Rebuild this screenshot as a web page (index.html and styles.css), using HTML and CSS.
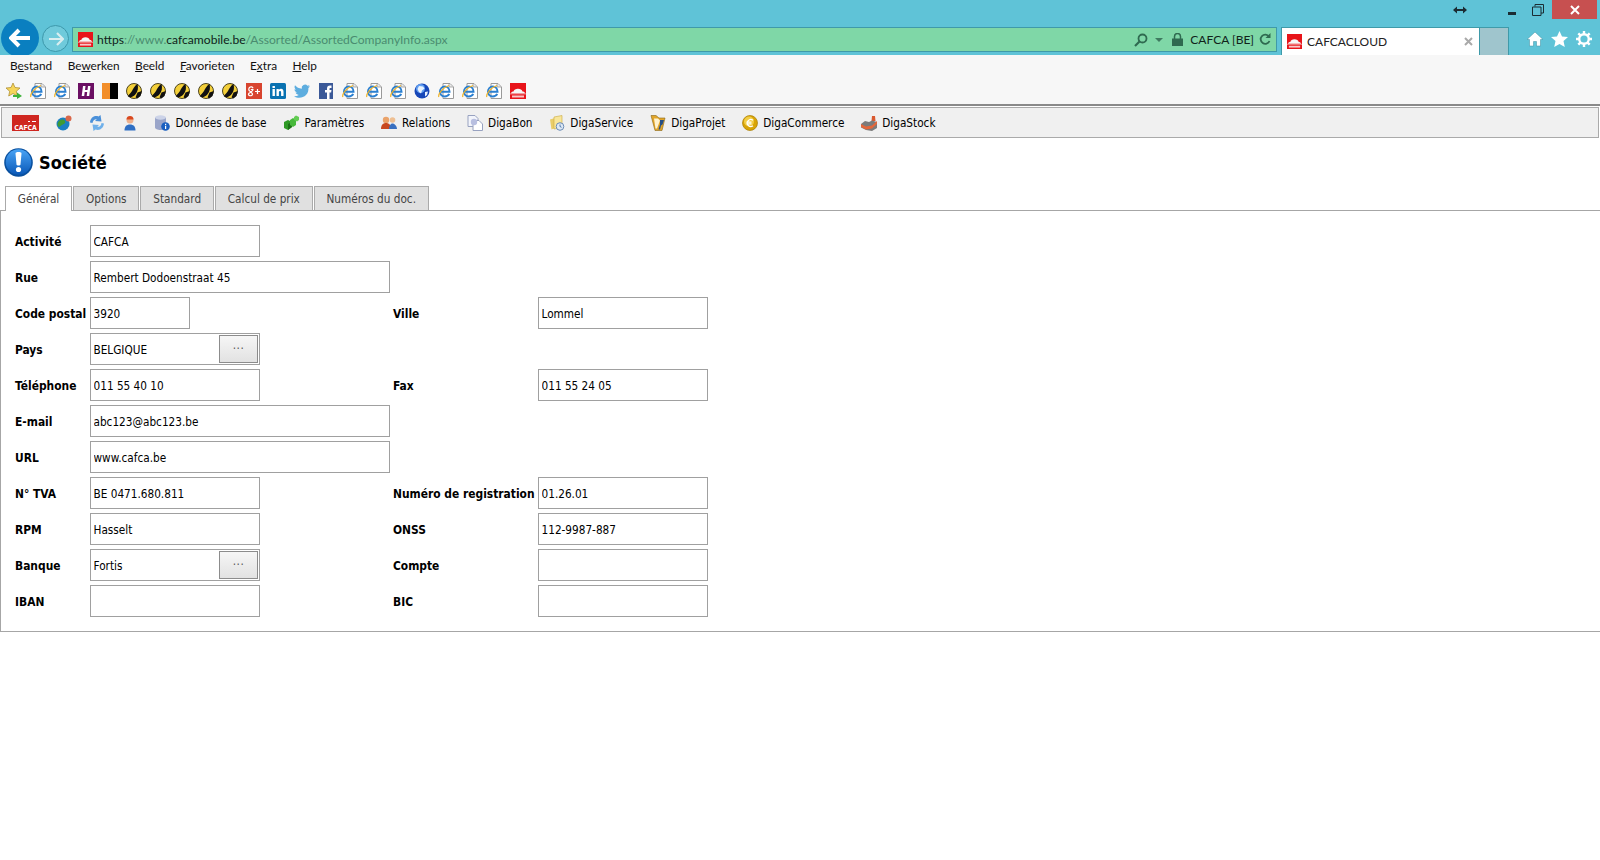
FILE: index.html
```html
<!DOCTYPE html>
<html lang="fr">
<head>
    <meta charset="UTF-8">
    <title>CAFCACLOUD</title>
    <link rel="stylesheet" href="styles.css">
</head>
<body>
    <svg class="defs" width="0" height="0">
        <linearGradient id="orb-blue" x1="0" y1="0" x2="0" y2="1">
            <stop offset="0" stop-color="#4aa4f5"/>
            <stop offset="1" stop-color="#0a58b8"/>
        </linearGradient>
        <symbol id="ico-ie" viewBox="0 0 16 16">
            <path d="M5 .5h7l3.500 3.500v11.500H5z" fill="#fff" stroke="#9a9a9a"/>
            <path d="M11 1v3h4" fill="#e8e8e8" stroke="#9a9a9a" stroke-width=".8"/>
            <path d="M2 8.800h9.500C11.500 5.400 9.200 3.600 6.800 3.600 4 3.600 2 5.900 2 8.600s2 4.900 4.800 4.900c2 0 3.600-1 4.400-2.600" fill="none" stroke="#2a7fd0" stroke-width="2"/>
            <path d="M.8 14C0 11 4.500 4.500 11 2.500" fill="none" stroke="#f0b428" stroke-width="1.200"/>
        </symbol>
        <symbol id="ico-taxi" viewBox="0 0 16 16">
            <circle cx="8" cy="8" r="7.500" fill="#f3cf3a" stroke="#3a3210" stroke-width=".9"/>
            <path d="M11.500 .8C12.500 5 12 8.500 9.500 11.200 7.500 13.500 4.500 15.300 1.800 13.300 3.200 11 4.500 10.500 6 8 7 6 8.500 3 11.500 .8z" fill="#111"/>
            <path d="M11.500 9.500l4.300-1.500-1.300 5-3.500 2.800-1.300-1.800z" fill="#111"/>
        </symbol>
        <symbol id="ico-cafca" viewBox="0 0 16 16">
            <rect width="16" height="16" fill="#e8141a"/>
            <path d="M1 10.500c0-1.500 1.500-2 2.500-2 .5-1.800 2.200-2.800 4.500-2.800s4 1 4.500 2.800c1 0 2.500.5 2.500 2z" fill="#f6f6f6"/>
            <rect x="0" y="10.500" width="16" height=".8" fill="#f4b0b0"/>
            <rect x="2" y="12.500" width="12" height="2" fill="#f9c8c8"/>
        </symbol>
        <symbol id="ico-globe" viewBox="0 0 16 16">
            <circle cx="8" cy="8" r="7.500" fill="#1747b8"/>
            <circle cx="6.500" cy="5.500" r="4.500" fill="#5f9df0"/>
            <path d="M5 3l4 .5 1.500 2-2.500 2-1 3-2-1.500L3.500 6zM11 9l3-.5-1 3.500-2 1.500z" fill="#e9f3ff"/>
        </symbol>
        <symbol id="ico-orb" viewBox="0 0 16 16">
            <circle cx="7" cy="9" r="6.500" fill="#1b7fc4"/>
            <path d="M3 6c2-2 5-2 6 0s-1 3-3 4-3 3-4 1-.5-3 1-5z" fill="#3f9b35"/>
            <circle cx="12.500" cy="3.500" r="3" fill="#d9674a"/>
        </symbol>
        <symbol id="ico-sync" viewBox="0 0 16 16">
            <path d="M1 7.500C1.500 3 5 0 9.500 1.500L11.500 0l1 6.500-6.500-.5 1.800-1.800C6 3.800 3.800 5 3.500 8z" fill="#4a90d9"/>
            <path d="M15 8.500c-.5 4.500-4 7.500-8.500 6L4.500 16l-1-6.500 6.500.5-1.800 1.800c1.800.4 4-.8 4.300-3.800z" fill="#6fb0ea"/>
        </symbol>
        <symbol id="ico-user" viewBox="0 0 16 16">
            <circle cx="8" cy="5" r="3.500" fill="#eeb08c"/>
            <path d="M4.500 4.500C4.500 2 6 1 8 1s3.500 1 3.500 3.500z" fill="#d9481f"/>
            <path d="M2.500 15.500c0-4 2-6 5.500-6s5.500 2 5.500 6z" fill="#2f6fc4"/>
        </symbol>
        <symbol id="ico-db" viewBox="0 0 16 16">
            <path d="M1 2.500v10c0 1.300 2.500 2.500 5.500 2.500s5.500-1.200 5.500-2.500v-10z" fill="#9aa5c9"/>
            <ellipse cx="6.500" cy="2.500" rx="5.500" ry="2.200" fill="#ccd3e8"/>
            <circle cx="11.500" cy="11.500" r="4.300" fill="#1a5fc0"/>
            <rect x="11" y="8.800" width="1.200" height="1.300" fill="#fff"/>
            <rect x="11" y="10.800" width="1.200" height="3.200" fill="#fff"/>
        </symbol>
        <symbol id="ico-cubes" viewBox="0 0 16 16">
            <path d="M1 7l4-2 4 2v5l-4 3-4-2z" fill="#2f9a26"/>
            <path d="M5 9l4-2v5l-4 3z" fill="#1c7016"/>
            <path d="M7 5l3-2 3 2v5l-3 2-3-2z" fill="#46b83a"/>
            <path d="M11 2l2-1.500 3 1.500v3l-2 1.500-3-1.500z" fill="#63cc53"/>
        </symbol>
        <symbol id="ico-people" viewBox="0 0 16 16">
            <circle cx="5" cy="5" r="3.200" fill="#eaa36a"/>
            <path d="M0 14c0-4 2-6 5-6s5 2 5 6z" fill="#c8481f"/>
            <circle cx="11.500" cy="5" r="2.800" fill="#eebf92"/>
            <path d="M8 14c0-3 1.500-5.500 3.500-5.500S16 11 16 14z" fill="#3a70c0"/>
        </symbol>
        <symbol id="ico-page" viewBox="0 0 16 16">
            <path d="M1 .5h7l3 3v8H1z" fill="#f2f4fb" stroke="#98a2c0"/>
            <path d="M6 5.500h6l3.500 3.500v6.500H6z" fill="#fff" stroke="#98a2c0"/>
            <circle cx="7" cy="7" r="3.200" fill="#b8bfe0"/>
        </symbol>
        <symbol id="ico-folder" viewBox="0 0 16 16">
            <path d="M1 4.500l5-1.500v10l-3.500 1.500z" fill="#e9cd68"/>
            <path d="M5 2l8-1.500v12L5 14z" fill="#f8e69a" stroke="#c9a83c" stroke-width=".6"/>
            <circle cx="11" cy="11.500" r="3.800" fill="#dfe9f5" stroke="#6a8bb5"/>
            <path d="M11 9.500v2l1.500.8" fill="none" stroke="#2f5f99" stroke-width=".8"/>
        </symbol>
        <symbol id="ico-project" viewBox="0 0 16 16">
            <path d="M1 .5h5l3 2.500h6L12 15.500H5z" fill="#e1a52a" stroke="#8a6412" stroke-width=".6"/>
            <path d="M4 3.500h4l2 2-3 8H5.500z" fill="#fff3cf"/>
            <path d="M10 5h4l-1.500 4.500-1.500 1-1 4h-1.500l1.500-5z" fill="#244f86"/>
        </symbol>
        <symbol id="ico-euro" viewBox="0 0 16 16">
            <circle cx="8" cy="8" r="7.500" fill="#d9a406" stroke="#a87c04" stroke-width=".7"/>
            <circle cx="7" cy="6.500" r="5" fill="#f2cd45"/>
            <path d="M11 5.300A3.500 3.500 0 1 0 11 10.700M4.500 7.200h5M4.500 8.900h5" fill="none" stroke="#fff" stroke-width="1.300"/>
        </symbol>
        <symbol id="ico-factory" viewBox="0 0 16 16">
            <path d="M11 1h3l.5 5h-4z" fill="#d9592f"/>
            <path d="M0 9l4-3 4 1 3-1.500 5 1.500v6l-5 3-6-1-5-2.500z" fill="#7b7b7b"/>
            <path d="M0 9l5 2.500 6-1 5-4.500v3l-5 4.500-6 1-5-2.500z" fill="#e4673a"/>
        </symbol>
    </svg>

    <div class="chrome">
        <div class="win-row">
            <span class="resize">
                <svg width="14" height="8" viewBox="0 0 14 8"><path d="M0 4l4-3.500v2.500h6V.5l4 3.500-4 3.500V5H4v2.500z" fill="#1b2c33"/></svg>
            </span>
            <span class="win-btn">
                <svg width="10" height="10" viewBox="0 0 10 10"><rect x="1" y="7" width="8" height="3" fill="#1b2c33"/></svg>
            </span>
            <span class="win-btn">
                <svg width="12" height="12" viewBox="0 0 12 12"><path d="M3 2.500V.5h8.500V9H9M.5 3h8.500v8.500H.5z" fill="none" stroke="#1b2c33"/></svg>
            </span>
            <span class="win-btn win-close">
                <svg width="10" height="10" viewBox="0 0 10 10"><path d="M1 1l8 8M9 1L1 9" stroke="#fff" stroke-width="2"/></svg>
            </span>
        </div>
        <div class="nav-row">
            <span class="back">
                <svg width="22" height="20" viewBox="0 0 22 20"><path d="M10 2l-8 8 8 8M3 10h18" fill="none" stroke="#fff" stroke-width="4"/></svg>
            </span>
            <span class="forward">
                <svg width="16" height="14" viewBox="0 0 16 14"><path d="M9 1l6 6-6 6M14 7H1" fill="none" stroke="#d9eef0" stroke-width="2.200"/></svg>
            </span>
            <div class="address">
                <svg class="fav"><use href="#ico-cafca"/></svg>
                <span class="url"><b>https</b>://www.<b>cafcamobile.be</b>/Assorted/AssortedCompanyInfo.aspx</span>
                <svg class="addr-ico" width="14" height="14" viewBox="0 0 14 14"><circle cx="8.500" cy="5.500" r="4" fill="none" stroke="#2f6a50" stroke-width="1.800"/><path d="M5.500 8.500L1 13" stroke="#2f6a50" stroke-width="2.200"/></svg>
                <svg class="addr-caret" width="8" height="4" viewBox="0 0 8 4"><path d="M0 0h8L4 4z" fill="#3f7a60"/></svg>
                <svg class="addr-lock" width="11" height="13" viewBox="0 0 11 13"><path d="M2.500 6V3.500a3 3 0 0 1 6 0V6" fill="none" stroke="#2f6a50" stroke-width="1.500"/><rect y="5.500" width="11" height="7.500" fill="#2f6a50"/></svg>
                <span class="site-id">CAFCA [BE]</span>
                <svg class="addr-refresh" width="12" height="13" viewBox="0 0 12 13"><path d="M10 3.500A4.600 4.600 0 1 0 10.500 8" fill="none" stroke="#2f6a50" stroke-width="1.800"/><path d="M11.500 0v5h-5z" fill="#2f6a50"/></svg>
            </div>
            <div class="tab-active">
                <svg class="fav"><use href="#ico-cafca"/></svg>
                <span class="tab-title">CAFCACLOUD</span>
                <svg class="tab-x" width="9" height="9" viewBox="0 0 9 9"><path d="M1 1l7 7M8 1L1 8" stroke="#a9a9a9" stroke-width="2"/></svg>
            </div>
            <div class="tab-new"></div>
            <div class="tools">
                <svg width="16" height="16" viewBox="0 0 16 16"><path d="M8 1L0 8.500h2.500V15h4v-4.500h3V15h4V8.500H16z" fill="#fff" stroke="#3d8ea0" stroke-width=".5"/></svg>
                <svg width="17" height="16" viewBox="0 0 17 16"><path d="M8.500 0l2.500 5.500 6 .6-4.500 4 1.300 5.900-5.300-3-5.300 3 1.300-5.900L0 6.100l6-.6z" fill="#fff"/></svg>
                <svg width="16" height="16" viewBox="0 0 16 16"><circle cx="8" cy="8" r="4.800" fill="none" stroke="#fff" stroke-width="2.400"/><path d="M8 0v3M8 13v3M0 8h3M13 8h3M2.300 2.300l2.100 2.100M11.600 11.600l2.100 2.100M13.700 2.300l-2.100 2.100M4.400 11.600l-2.100 2.100" stroke="#fff" stroke-width="2.400"/></svg>
            </div>
        </div>
    </div>

    <div class="menu-bar">
        <span>B<u>e</u>stand</span>
        <span>Be<u>w</u>erken</span>
        <span><u>B</u>eeld</span>
        <span><u>F</u>avorieten</span>
        <span>E<u>x</u>tra</span>
        <span><u>H</u>elp</span>
    </div>

    <div class="fav-bar">
        <svg class="i16" viewBox="0 0 16 16"><path d="M7 0l2 4.500 5 .5-3.700 3.300 1 4.700L7 10.500 2.700 13l1-4.700L0 5l5-.5z" fill="#f6d65a" stroke="#a8862a" stroke-width=".7"/><path d="M7 12h4V9.500l5 3.500-5 3v-2H7z" fill="#3fb23a"/></svg>
        <svg class="i16"><use href="#ico-ie"/></svg>
        <svg class="i16"><use href="#ico-ie"/></svg>
        <svg class="i16" viewBox="0 0 16 16"><rect width="16" height="16" fill="#6b0f63"/><path d="M5 3h2.500L7 7h2.500L10 3h2.500l-1.300 10H8.700l.5-4H6.700l-.5 4H3.700z" fill="#fff"/></svg>
        <svg class="i16" viewBox="0 0 16 16"><rect width="8" height="16" fill="#f28e2a"/><rect x="8" width="8" height="16"/></svg>
        <svg class="i16"><use href="#ico-taxi"/></svg>
        <svg class="i16"><use href="#ico-taxi"/></svg>
        <svg class="i16"><use href="#ico-taxi"/></svg>
        <svg class="i16"><use href="#ico-taxi"/></svg>
        <svg class="i16"><use href="#ico-taxi"/></svg>
        <svg class="i16" viewBox="0 0 16 16"><rect width="16" height="16" fill="#d8442f"/><path d="M7 5.200C6.500 3.800 4.800 3.500 3.800 4.200 2.400 5.200 2.400 7.600 4 8.300c1.300.5 2.700 0 3-1.800H4.800M4.500 9.500c-2 .5-2.500 2-1.500 2.800s3.500.5 3.500-1-2-1.800-2-2.500M11.500 6v5M9 8.500h5" fill="none" stroke="#fff" stroke-width="1.200"/></svg>
        <svg class="i16" viewBox="0 0 16 16"><rect width="16" height="16" rx="1.500" fill="#0a72b1"/><path d="M2.500 6h2.400v7H2.500zM2.500 3h2.400v2H2.500zM6.500 6h2.300v1c.5-.8 1.300-1.200 2.200-1.200 2 0 2.500 1.300 2.500 3.200v4h-2.400V9.500c0-1-.3-1.600-1.100-1.600S8.900 8.500 8.900 9.500V13H6.500z" fill="#fff"/></svg>
        <svg class="i16" viewBox="0 0 16 16"><path d="M16 3.200c-.6.300-1.200.4-1.900.5.700-.4 1.200-1 1.400-1.800-.6.400-1.300.6-2 .8A3.300 3.300 0 0 0 7.800 5.700C5 5.600 2.600 4.300 1 2.300c-.9 1.500-.4 3.400 1 4.400-.5 0-1-.2-1.500-.4 0 1.600 1.100 2.900 2.600 3.200-.5.100-1 .2-1.500.1.400 1.300 1.600 2.200 3.100 2.300A6.600 6.600 0 0 1 0 13.200C4 15.800 9 15 12 12c2-2 2.600-4.500 2.400-7 .6-.5 1.200-1.100 1.600-1.800z" fill="#5daddf"/></svg>
        <svg class="i16" viewBox="0 0 16 16"><rect x="1" width="14" height="16" fill="#3b5998"/><path d="M9 16V9.500H7V7h2V5.500C9 3.500 10 2.500 12 2.500h1.500V5H12.500c-.8 0-1 .4-1 1V7h2l-.4 2.500h-1.600V16z" fill="#fff"/></svg>
        <svg class="i16"><use href="#ico-ie"/></svg>
        <svg class="i16"><use href="#ico-ie"/></svg>
        <svg class="i16"><use href="#ico-ie"/></svg>
        <svg class="i16"><use href="#ico-globe"/></svg>
        <svg class="i16"><use href="#ico-ie"/></svg>
        <svg class="i16"><use href="#ico-ie"/></svg>
        <svg class="i16"><use href="#ico-ie"/></svg>
        <svg class="i16"><use href="#ico-cafca"/></svg>
    </div>

    <div class="app-menu">
        <svg class="logo" viewBox="0 0 27 16"><rect width="27" height="16" fill="#cf2620"/><rect x="16" y="6" width="2" height="1" fill="#fff"/><rect x="20" y="6" width="4" height="1" fill="#fff"/><text x="13.500" y="14.500" class="logo-text">CAFCA</text></svg>
        <a class="app-item"><svg class="i16"><use href="#ico-orb"/></svg></a>
        <a class="app-item"><svg class="i16"><use href="#ico-sync"/></svg></a>
        <a class="app-item"><svg class="i16"><use href="#ico-user"/></svg></a>
        <a class="app-item"><svg class="i16"><use href="#ico-db"/></svg>Données de base</a>
        <a class="app-item"><svg class="i16"><use href="#ico-cubes"/></svg>Paramètres</a>
        <a class="app-item"><svg class="i16"><use href="#ico-people"/></svg>Relations</a>
        <a class="app-item"><svg class="i16"><use href="#ico-page"/></svg>DigaBon</a>
        <a class="app-item"><svg class="i16"><use href="#ico-folder"/></svg>DigaService</a>
        <a class="app-item"><svg class="i16"><use href="#ico-project"/></svg>DigaProjet</a>
        <a class="app-item"><svg class="i16"><use href="#ico-euro"/></svg>DigaCommerce</a>
        <a class="app-item"><svg class="i16"><use href="#ico-factory"/></svg>DigaStock</a>
    </div>

    <div class="page-title">
        <svg width="29" height="29" viewBox="0 0 29 29">
            <circle cx="14.500" cy="14.500" r="14.300" fill="#084f9e"/>
            <circle cx="14.500" cy="14" r="12.800" fill="url(#orb-blue)"/>
            <path d="M11.500 5.500c0-1 1-1.500 3-1.500s3 .5 3 1.500l-1 11c0 .7-1 1-2 1s-2-.3-2-1z" fill="#fff"/>
            <circle cx="14.500" cy="21.500" r="2.600" fill="#fff"/>
        </svg>
        <h1>Société</h1>
    </div>

    <div class="tabs">
        <span class="tab selected">Général</span>
        <span class="tab">Options</span>
        <span class="tab">Standard</span>
        <span class="tab">Calcul de prix</span>
        <span class="tab">Numéros du doc.</span>
    </div>

    <div class="panel">
        <div class="form">
            <label>Activité</label>
            <div class="cell"><input class="med" value="CAFCA"></div>
            <span class="blank"></span>

            <label>Rue</label>
            <div class="cell"><input class="wide" value="Rembert Dodoenstraat 45"></div>
            <span class="blank"></span>

            <label>Code postal</label>
            <div class="cell"><input class="short" value="3920"></div>
            <label>Ville</label>
            <div class="cell"><input class="med" value="Lommel"></div>

            <label>Pays</label>
            <div class="cell">
                <div class="lookup"><input value="BELGIQUE"><button>···</button></div>
            </div>
            <span class="blank"></span>

            <label>Téléphone</label>
            <div class="cell"><input class="med" value="011 55 40 10"></div>
            <label>Fax</label>
            <div class="cell"><input class="med" value="011 55 24 05"></div>

            <label>E-mail</label>
            <div class="cell"><input class="wide" value="abc123@abc123.be"></div>
            <span class="blank"></span>

            <label>URL</label>
            <div class="cell"><input class="wide" value="www.cafca.be"></div>
            <span class="blank"></span>

            <label>N° TVA</label>
            <div class="cell"><input class="med" value="BE 0471.680.811"></div>
            <label>Numéro de registration</label>
            <div class="cell"><input class="med" value="01.26.01"></div>

            <label>RPM</label>
            <div class="cell"><input class="med" value="Hasselt"></div>
            <label>ONSS</label>
            <div class="cell"><input class="med" value="112-9987-887"></div>

            <label>Banque</label>
            <div class="cell">
                <div class="lookup"><input value="Fortis"><button>···</button></div>
            </div>
            <label>Compte</label>
            <div class="cell"><input class="med" value=""></div>

            <label>IBAN</label>
            <div class="cell"><input class="med" value=""></div>
            <label>BIC</label>
            <div class="cell"><input class="med" value=""></div>
        </div>
    </div>
</body>
</html>
```

FILE: styles.css
```css
* {
    box-sizing: border-box;
}
html, body {
    height: 100%;
}
body {
    margin: 0;
    background-color: #fff;
    color: #000;
    font-family: "DejaVu Sans Condensed", "DejaVu Sans", sans-serif;
    font-size: 11.7px;
    overflow: hidden;
}
.defs {
    position: absolute;
}
.i16 {
    width: 16px;
    height: 16px;
    flex: none;
    display: block;
}
.fav {
    width: 15px;
    height: 15px;
    flex: none;
}

/* browser frame */
.chrome {
    height: 55px;
    background-color: #5fc3d7;
    overflow: hidden;
    font-family: Lato, "Noto Sans", sans-serif;
}
.win-row {
    height: 27px;
    display: flex;
    justify-content: flex-end;
    align-items: flex-start;
    padding-right: 3px;
}
.resize {
    height: 19px;
    display: flex;
    align-items: center;
    margin-right: 32px;
}
.win-btn {
    width: 26px;
    height: 19px;
    display: flex;
    align-items: center;
    justify-content: center;
}
.win-close {
    width: 45px;
    margin-left: 1px;
    background-color: #c75050;
}
.nav-row {
    height: 28px;
    display: flex;
    align-items: flex-start;
    padding-left: 1px;
}
.back {
    width: 38px;
    height: 38px;
    margin-top: -8px;
    border-radius: 50%;
    background-color: #0a7fc0;
    display: flex;
    align-items: center;
    justify-content: center;
    flex: none;
}
.forward {
    width: 27px;
    height: 27px;
    margin: -2px 3px 0 3px;
    border: 1px solid #3d98ab;
    border-radius: 50%;
    background-color: #6fcadb;
    display: flex;
    align-items: center;
    justify-content: center;
    flex: none;
}
.address {
    width: 1205px;
    height: 25px;
    border: 1px solid #3f9aa9;
    background-color: #7fd7a7;
    display: flex;
    align-items: center;
    padding: 0 5px;
    color: #4a8c70;
    font-size: 12.1px;
    flex: none;
}
.address .fav {
    margin-right: 4px;
}
.url {
    flex: 1;
}
.url b {
    color: #10231a;
    font-weight: 400;
}
.addr-caret {
    margin: 0 9px 0 7px;
}
.site-id {
    margin: 0 5px 0 7px;
    color: #10231a;
    font-size: 12px;
}
.tab-active {
    width: 199px;
    height: 28px;
    margin-left: 4px;
    background-color: #fff;
    border: 1px solid #3f9aa9;
    border-bottom: none;
    display: flex;
    align-items: center;
    padding-left: 5px;
    color: #222;
    font-size: 12px;
    flex: none;
}
.tab-title {
    flex: 1;
    margin-left: 5px;
}
.tab-x {
    margin-right: 6px;
}
.tab-new {
    width: 29px;
    height: 28px;
    background-color: #9fc5cd;
    border-right: 1px solid #3f9aa9;
    border-top: 1px solid #3f9aa9;
    flex: none;
}
.tools {
    display: flex;
    gap: 8px;
    margin: 4px 0 0 18px;
}

/* ie menu + favorites */
.menu-bar {
    height: 24px;
    background-color: #f7f7f7;
    display: flex;
    align-items: center;
    gap: 15.5px;
    padding: 0 0 3px 10px;
    font-family: Lato, "Noto Sans", sans-serif;
    font-size: 11.8px;
    color: #111;
}
.fav-bar {
    height: 27px;
    background-color: #f7f7f7;
    border-bottom: 2px solid #8a8a8a;
    display: flex;
    align-items: flex-start;
    gap: 8px;
    padding: 4px 0 0 6px;
}

/* application menu */
.app-menu {
    height: 31px;
    margin: 1px 1px 0 1px;
    background-color: #f0f0f0;
    border: 1px solid #aaa;
    display: flex;
    align-items: center;
    padding-left: 10px;
}
.logo {
    width: 27px;
    height: 16px;
    flex: none;
    margin-right: 17px;
}
.logo-text {
    fill: #fff;
    font-size: 6.8px;
    font-weight: 700;
    text-anchor: middle;
}
.app-item {
    display: flex;
    align-items: center;
    gap: 5px;
    margin-right: 16.8px;
    color: #000;
}

/* page */
.page-title {
    height: 48px;
    display: flex;
    align-items: center;
    gap: 6px;
    padding-left: 4px;
}
.page-title h1 {
    margin: 0;
    font-size: 18px;
    font-weight: 700;
}
.tabs {
    display: flex;
    gap: 1px;
    padding-left: 5px;
    position: relative;
    z-index: 1;
}
.tab {
    height: 24px;
    padding: 0 11.85px;
    display: flex;
    align-items: center;
    background-color: #e0e0e0;
    border: 1px solid #aaa;
    border-bottom: none;
    color: #444;
}
.tab.selected {
    height: 25px;
    background-color: #fff;
    margin-bottom: -1px;
}
.panel {
    margin-top: 0;
    border: 1px solid #a6a6a6;
    border-right: none;
    padding: 14px 0 14px 14px;
}
.form {
    display: grid;
    grid-template-columns: 75px 303px 145px 170px;
    grid-auto-rows: 32px;
    row-gap: 4px;
    align-items: center;
}
.form label {
    font-size: 11.9px;
    font-weight: 700;
    white-space: nowrap;
    padding-top: 1px;
}
.blank {
    grid-column: span 2;
}
.cell {
    display: flex;
}
input {
    height: 32px;
    padding: 1px 3px 0 2.5px;
    border: 1px solid #a0a0a0;
    font: inherit;
    color: #000;
    background-color: #fff;
}
.short {
    width: 100px;
}
.med {
    width: 170px;
}
.wide {
    width: 300px;
}
.lookup {
    width: 170px;
    height: 32px;
    border: 1px solid #a0a0a0;
    display: flex;
    align-items: center;
}
.lookup input {
    flex: 1;
    min-width: 0;
    height: 30px;
    border: none;
}
.lookup button {
    width: 39px;
    height: 28px;
    margin-right: 1px;
    padding: 0;
    border: 1px solid #8c8c8c;
    background: linear-gradient(#f6f6f6, #e2e2e2);
    color: #555;
    font: inherit;
    letter-spacing: .5px;
    flex: none;
}
```
